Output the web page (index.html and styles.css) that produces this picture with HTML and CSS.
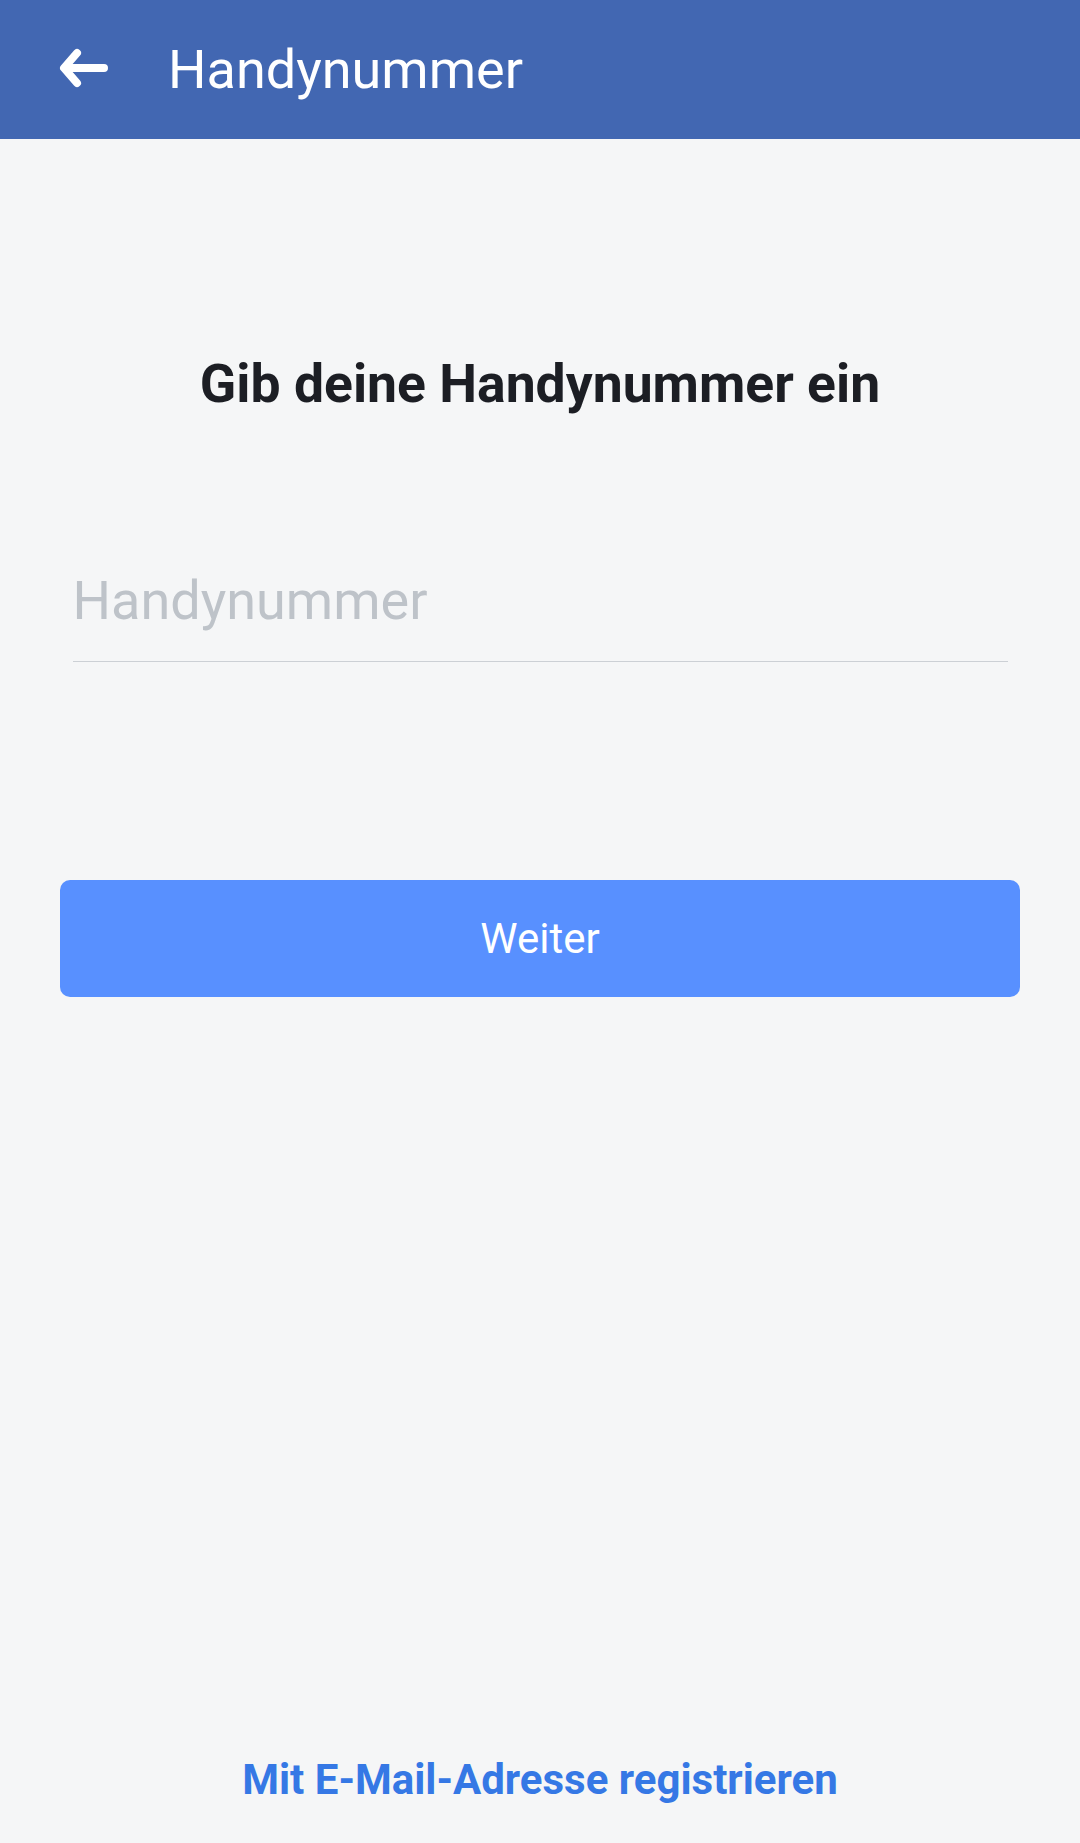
FILE: index.html
```html
<!DOCTYPE html>
<html lang="de">
  <head>
    <meta charset="UTF-8" />
    <meta name="viewport" content="width=device-width, initial-scale=1.0" />
    <title>Handynummer</title>
    <link rel="stylesheet" href="styles.css">
  </head>
  <body>
    <div class="page">
      <!-- Kopfzeile -->
      <header class="topbar">
        <svg class="back" width="56" height="48" viewBox="0 0 56 48" aria-hidden="true">
          <path d="M48 22 H9 M21 7 L8 22 L21 37" fill="none" stroke="#fff" stroke-width="8" stroke-linecap="round" stroke-linejoin="round" />
        </svg>
        <span class="topbar-title">Handynummer</span>
      </header>

      <main class="content">
        <h1>Gib deine Handynummer ein</h1>
        <!-- Eingabe -->
        <input type="tel" class="phone" placeholder="Handynummer" />
        <button class="next">Weiter</button>
      </main>

      <a class="email-link" href="#">Mit E-Mail-Adresse registrieren</a>
    </div>
  </body>
</html>
```

FILE: styles.css
```css
body {
  margin: 0;
  font-family: Roboto, "Liberation Sans", Arial, sans-serif;
  background-color: #f5f6f7;
}
.page {
  display: flex;
  flex-direction: column;
  height: 100vh;
}
.topbar {
  display: flex;
  align-items: center;
  height: 139px;
  padding-left: 56px;
  background-color: #4267b2;
  box-sizing: border-box;
}
.back {
  display: block;
  flex-shrink: 0;
}
.topbar-title {
  margin-left: 56px;
  font-size: 54px;
  line-height: 64px;
  color: #fff;
}
.content {
  display: flex;
  flex-direction: column;
  align-items: center;
}
h1 {
  margin: 213px 0 0;
  font-size: 53.5px;
  line-height: 64px;
  font-weight: 700;
  color: #1c1e24;
}
.phone {
  margin-top: 152px;
  width: 935px;
  padding: 0 0 29px;
  font-family: inherit;
  font-size: 54px;
  line-height: 64px;
  height: 94px;
  color: #1c1e21;
  background: transparent;
  border: none;
  border-bottom: 1px solid #ccd0d5;
  outline: none;
  box-sizing: border-box;
}
.phone::placeholder {
  color: #bec3c9;
}
.next {
  margin-top: 218px;
  width: 960px;
  height: 117px;
  font-family: inherit;
  font-size: 42px;
  color: #fff;
  background-color: #5890ff;
  border: none;
  border-radius: 10px;
  cursor: pointer;
}
.email-link {
  margin-top: auto;
  padding-bottom: 37px;
  text-align: center;
  font-size: 42px;
  line-height: 52px;
  font-weight: 700;
  color: #3578e5;
  text-decoration: none;
}
```
